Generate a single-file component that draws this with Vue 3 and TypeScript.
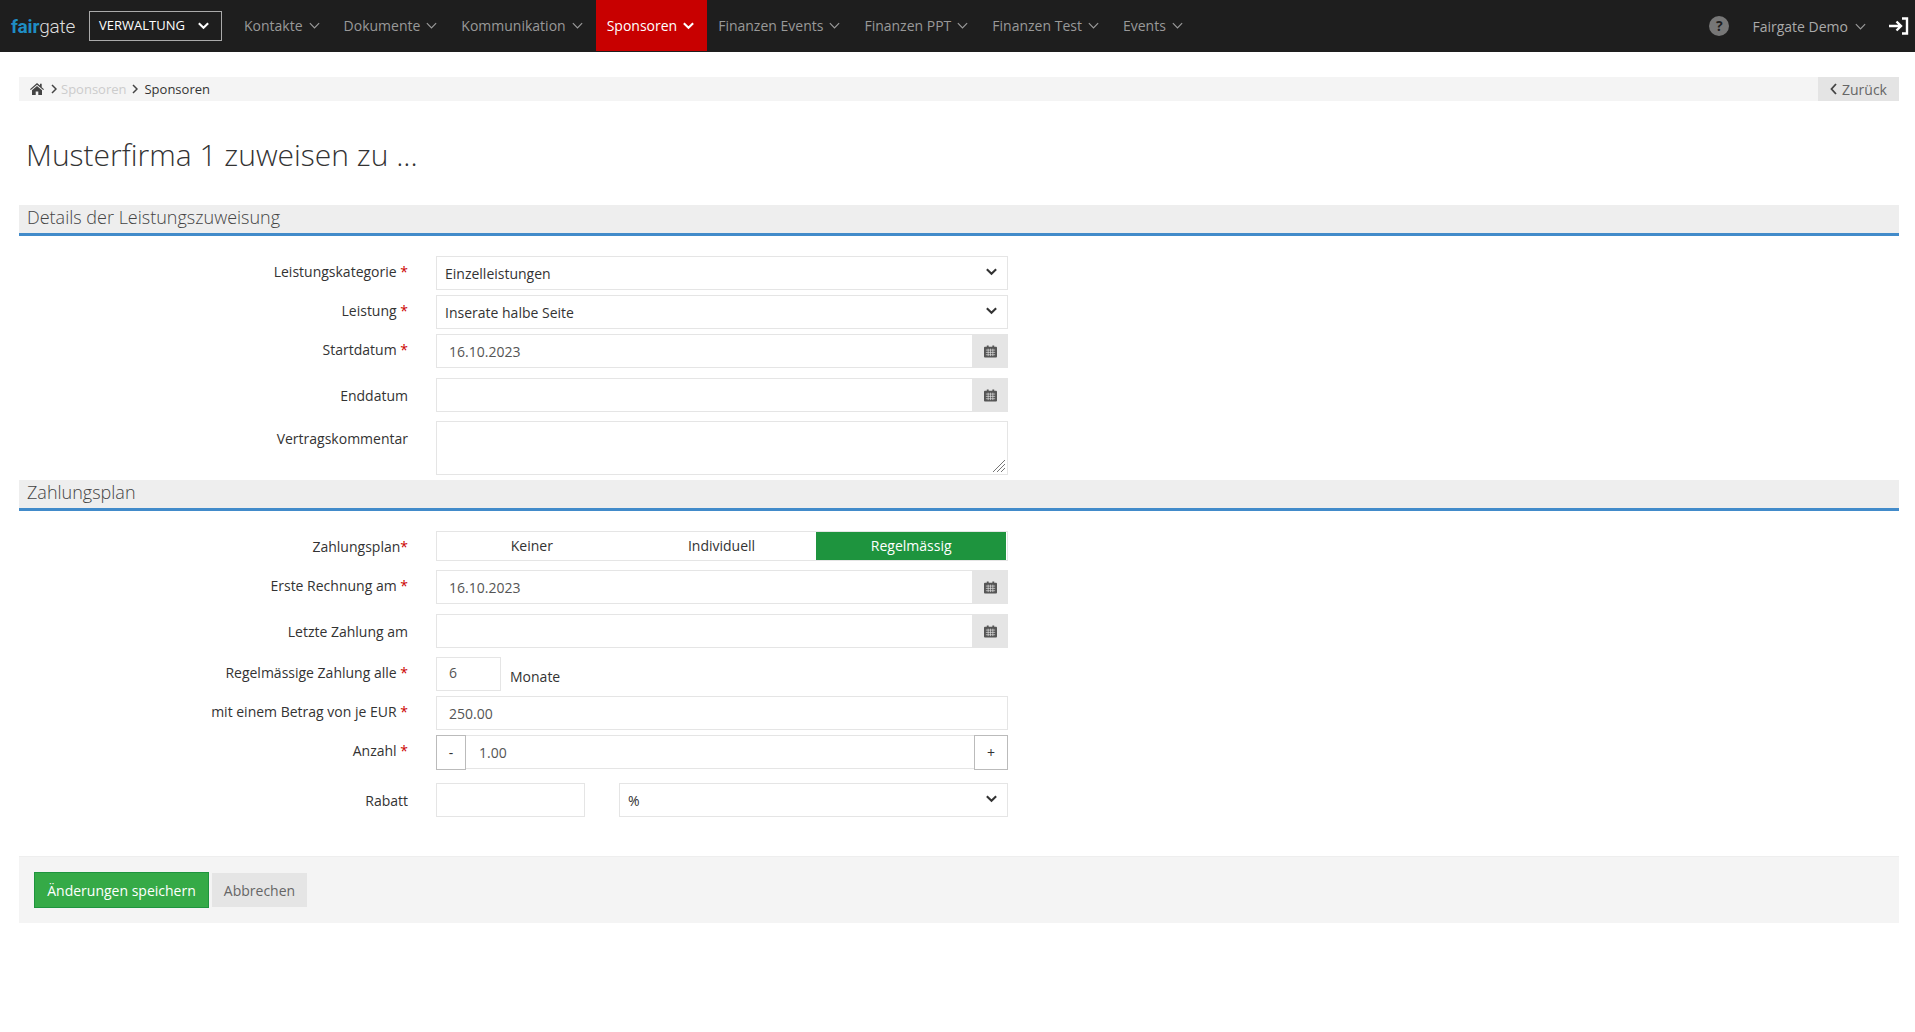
<script setup lang="ts">
interface NavItem { label: string; active?: boolean }
const navItems: NavItem[] = [
  { label: 'Kontakte' },
  { label: 'Dokumente' },
  { label: 'Kommunikation' },
  { label: 'Sponsoren', active: true },
  { label: 'Finanzen Events' },
  { label: 'Finanzen PPT' },
  { label: 'Finanzen Test' },
  { label: 'Events' },
]
const chevron = 'M2 4.5 L7 9.5 L12 4.5'
const calendar = 'M1 3h2V1.5h2V3h4V1.5h2V3h2a1 1 0 0 1 1 1v9.5a1 1 0 0 1-1 1H1a1 1 0 0 1-1-1V4a1 1 0 0 1 1-1z'
</script>

<template>
  <div class="page">
    <header class="nav">
      <div class="logo"><b>fair</b>gate</div>
      <div class="mod">
        <span>VERWALTUNG</span>
        <svg class="chev bold" viewBox="0 0 14 14"><path :d="chevron" /></svg>
      </div>
      <ul class="menu">
        <li v-for="item in navItems" :key="item.label" :class="{ active: item.active }">
          <span>{{ item.label }}</span>
          <svg class="chev" :class="{ bold: item.active }" viewBox="0 0 14 14"><path :d="chevron" /></svg>
        </li>
      </ul>
      <div class="right">
        <span class="help">?</span>
        <span class="user">Fairgate Demo</span>
        <svg class="chev" viewBox="0 0 14 14"><path :d="chevron" /></svg>
        <svg class="signin" viewBox="0 0 20 18">
          <path d="M0 9h11M7.5 4.5 12 9l-4.5 4.5" />
          <path d="M13 1.5h5v15h-5" />
        </svg>
      </div>
    </header>

    <main class="content">
      <div class="crumbs">
        <svg class="home" viewBox="0 0 14 12"><path d="M7 0 0 6.2l.8.9L7 1.8l6.200 5.300.8-.9-2.300-2V.8H10v1.700zM2 7.200V12h3.700V8.500h2.600V12H12V7.200L7 3z" /></svg>
        <svg class="sep" viewBox="0 0 6 10"><path d="M1 1l4 4-4 4" /></svg>
        <span class="muted">Sponsoren</span>
        <svg class="sep" viewBox="0 0 6 10"><path d="M1 1l4 4-4 4" /></svg>
        <span class="current">Sponsoren</span>
        <div class="back">
          <svg class="back-icon" viewBox="0 0 7 12"><path d="M6 1 1.500 6 6 11" /></svg>
          <span>Zurück</span>
        </div>
      </div>

      <h1>Musterfirma 1 zuweisen zu ...</h1>

      <section>
        <h2>Details der Leistungszuweisung</h2>
        <div class="rows first">
          <div class="row">
            <label>Leistungskategorie <i>*</i></label>
            <div class="field select"><span>Einzelleistungen</span>
              <svg class="chev bold dark" viewBox="0 0 14 14"><path :d="chevron" /></svg></div>
          </div>
          <div class="row">
            <label>Leistung <i>*</i></label>
            <div class="field select"><span>Inserate halbe Seite</span>
              <svg class="chev bold dark" viewBox="0 0 14 14"><path :d="chevron" /></svg></div>
          </div>
          <div class="row wide-gap">
            <label>Startdatum <i>*</i></label>
            <div class="field date"><span class="val">16.10.2023</span>
              <span class="addon"><svg class="cal" viewBox="0 0 14 15"><path :d="calendar" /><path class="grid" d="M2 6.500h10M2 9h10M2 11.500h10M4.500 5v8M7 5v8M9.500 5v8" /></svg></span></div>
          </div>
          <div class="row gap-9">
            <label class="low">Enddatum</label>
            <div class="field date"><span class="val"></span>
              <span class="addon"><svg class="cal" viewBox="0 0 14 15"><path :d="calendar" /><path class="grid" d="M2 6.500h10M2 9h10M2 11.500h10M4.500 5v8M7 5v8M9.500 5v8" /></svg></span></div>
          </div>
          <div class="row area-row">
            <label class="low">Vertragskommentar</label>
            <div class="field area">
              <svg class="grip" viewBox="0 0 14 14"><path d="M13 1 1 13M13 5 5 13M13 9 9 13" /></svg>
            </div>
          </div>
        </div>
      </section>

      <section>
        <h2>Zahlungsplan</h2>
        <div class="rows">
          <div class="row toggle-row">
            <label>Zahlungsplan<i>*</i></label>
            <div class="toggle">
              <span>Keiner</span>
              <span>Individuell</span>
              <span class="on">Regelmässig</span>
            </div>
          </div>
          <div class="row wide-gap">
            <label>Erste Rechnung am <i>*</i></label>
            <div class="field date"><span class="val">16.10.2023</span>
              <span class="addon"><svg class="cal" viewBox="0 0 14 15"><path :d="calendar" /><path class="grid" d="M2 6.500h10M2 9h10M2 11.500h10M4.500 5v8M7 5v8M9.500 5v8" /></svg></span></div>
          </div>
          <div class="row gap-9">
            <label class="low">Letzte Zahlung am</label>
            <div class="field date"><span class="val"></span>
              <span class="addon"><svg class="cal" viewBox="0 0 14 15"><path :d="calendar" /><path class="grid" d="M2 6.500h10M2 9h10M2 11.500h10M4.500 5v8M7 5v8M9.500 5v8" /></svg></span></div>
          </div>
          <div class="row">
            <label>Regelmässige Zahlung alle <i>*</i></label>
            <div class="inline">
              <div class="field small"><span class="val up">6</span></div>
              <span class="unit">Monate</span>
            </div>
          </div>
          <div class="row">
            <label>mit einem Betrag von je EUR <i>*</i></label>
            <div class="field"><span class="val">250.00</span></div>
          </div>
          <div class="row gap-14">
            <label>Anzahl <i>*</i></label>
            <div class="field stepper">
              <span class="step minus">-</span>
              <span class="val count">1.00</span>
              <span class="step plus">+</span>
            </div>
          </div>
          <div class="row last">
            <label class="low">Rabatt</label>
            <div class="discount">
              <div class="field rabatt"></div>
              <div class="field select percent"><span>%</span>
                <svg class="chev bold dark" viewBox="0 0 14 14"><path :d="chevron" /></svg></div>
            </div>
          </div>
        </div>
      </section>

      <footer class="actions">
        <button class="save" type="button">Änderungen speichern</button>
        <button class="cancel" type="button">Abbrechen</button>
      </footer>
    </main>
  </div>
</template>

<style>
html, body { margin: 0; background: #fff; }
</style>

<style scoped>
.page { font-family: "Open Sans", sans-serif; font-size: 14px; color: #333; height: 1032px; overflow: hidden; }
.nav { display: flex; align-items: center; height: 52px; background: #1e1e1e; color: #aaa; }
.logo { width: 78px; padding-left: 11px; box-sizing: border-box; font-family: Roboto, sans-serif; font-size: 19px; font-weight: 300; color: #ddd; line-height: 52px; height: 50px; letter-spacing: -.2px; }
.logo b { color: #1f8dc4; font-weight: 700; }
.mod { display: flex; align-items: center; justify-content: space-between; box-sizing: border-box; width: 133px; height: 30px; margin-left: 11px; padding: 0 11px 2px 9px; border: 1px solid #aaa; color: #fff; font-size: 13px; }
.chev { width: 13px; height: 13px; flex: none; fill: none; stroke: #999; stroke-width: 1.300; }
.chev.bold { stroke: #fff; stroke-width: 2.200; }
.chev.dark { stroke: #333; }
.menu { display: flex; list-style: none; margin: 0 0 0 11px; padding: 0; height: 52px; }
.menu li { display: flex; align-items: center; gap: 5px; padding: 0 12px 0 11px; height: 51px; color: #999; }
.menu li.active { background: #c80000; color: #fff; }
.right { margin-left: auto; display: flex; align-items: center; height: 52px; padding-right: 6px; }
.help { width: 20px; height: 20px; border-radius: 50%; background: #777; color: #1e1e1e; font-weight: 700; font-size: 14px; line-height: 20px; text-align: center; margin-right: 23px; }
.user { color: #aaa; margin-right: 6px; }
.signin { width: 20px; height: 18px; margin-left: 22px; fill: none; stroke: #fff; stroke-width: 2.400; }

.content { padding: 25px 16px 0 19px; }
.crumbs { display: flex; align-items: center; height: 24px; background: #f4f4f4; font-size: 13px; padding-left: 11px; }
.home { width: 14px; height: 12px; fill: #444; margin-right: 7px; }
.sep { width: 6px; height: 10px; fill: none; stroke: #444; stroke-width: 1.500; margin-right: 4px; }
.muted { color: #ccc; margin-right: 6px; }
.current { color: #333; margin-left: 2px; }
.back { margin-left: auto; display: flex; align-items: center; height: 24px; width: 81px; box-sizing: border-box; padding-left: 12px; gap: 5px; background: #e4e4e4; color: #666; font-size: 14px; }
.back-icon { width: 7px; height: 12px; fill: none; stroke: #444; stroke-width: 1.800; }

h1 { margin: 0; padding: 34px 0 0 7px; height: 70px; box-sizing: content-box; font-size: 30px; font-weight: 300; line-height: 40px; color: #333; height: 70px; }
h2 { margin: 0; height: 31px; box-sizing: border-box; padding-left: 8px; background: #eee; border-bottom: 3px solid #428bca; font-size: 18px; font-weight: 300; line-height: 25px; color: #444; }

.rows { padding-top: 20px; }
.rows.first { padding-bottom: 5px; }
.row { display: flex; margin-bottom: 5px; }
.row.wide-gap { margin-bottom: 10px; }
.row.gap-9 { margin-bottom: 9px; }
.row.gap-14 { margin-bottom: 14px; }
.row.area-row { margin-bottom: 0; }
.row.toggle-row { margin-bottom: 9px; }
.row.last { margin-bottom: 39px; }
label { width: 389px; margin-right: 28px; text-align: right; line-height: 20px; padding-top: 6px; flex: none; color: #333; }
label.low { padding-top: 8px; }
label i { font-style: normal; color: #c00; }

.field { display: flex; align-items: center; box-sizing: border-box; width: 572px; height: 34px; border: 1px solid #e5e5e5; background: #fff; color: #333; }
.val { padding-left: 12px; color: #555; flex: 1; }
.val.up { padding-bottom: 4px; }
.select { justify-content: space-between; padding: 0 9px 0 8px; }
.select .chev { margin-top: -3px; }
.addon { display: flex; align-items: center; justify-content: center; width: 36px; height: 34px; margin-right: -1px; background: #e5e5e5; }
.cal { width: 13px; height: 14px; fill: #555; }
.cal .grid { fill: none; stroke: #e5e5e5; stroke-width: .7; }
.area { height: 54px; position: relative; }
.grip { position: absolute; right: 1px; bottom: 1px; width: 14px; height: 14px; fill: none; stroke: #666; stroke-width: .9; }

.toggle { display: flex; box-sizing: border-box; width: 572px; height: 30px; border: 1px solid #e5e5e5; padding-right: 1px; }
.toggle span { flex: 1; text-align: center; line-height: 28px; color: #333; }
.toggle .on { background: #1e943e; color: #fff; }

.inline { display: flex; align-items: center; width: 572px; }
.small { width: 65px; }
.unit { margin-left: 9px; padding-top: 4px; }

.stepper { overflow: visible; }
.step { display: flex; align-items: center; justify-content: center; box-sizing: border-box; height: 35px; background: #fff; color: #333; border: 1px solid #bbb; flex: none; margin-top: 1px; }
.minus { width: 30px; margin-left: -1px; }
.plus { width: 34px; margin-right: -1px; }
.count { padding-left: 13px; }

.discount { display: flex; width: 572px; justify-content: space-between; }
.rabatt { width: 149px; }
.percent { width: 389px; }

.actions { display: flex; align-items: center; height: 67px; box-sizing: border-box; padding-left: 15px; background: #f4f4f4; border-top: 1px solid #eee; }
button { font-family: inherit; font-size: 14px; cursor: pointer; }
.save { width: 175px; height: 36px; background: #35aa47; color: #fff; border: 1px solid #1e943e; padding: 0; }
.cancel { width: 95px; height: 34px; margin-left: 3px; background: #e5e5e5; color: #666; border: 0; padding: 0; }
</style>
